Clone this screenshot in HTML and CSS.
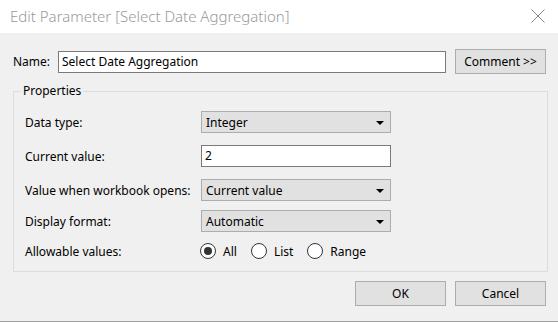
FILE: index.html
```html
<!DOCTYPE html>
<html lang="en">
<head>
  <meta charset="UTF-8">
  <title>Edit Parameter</title>
  <link rel="stylesheet" href="styles.css">
</head>
<body>
  <div class="dialog">
    <!-- Title bar -->
    <div class="titlebar">
      <span class="title">Edit Parameter [Select Date Aggregation]</span>
      <svg class="close" width="14" height="14" viewBox="0 0 14 14">
        <path d="M0.5 0.5 L13.5 13.5 M13.5 0.5 L0.5 13.5" stroke="#8a8a8a" stroke-width="1" fill="none"/>
      </svg>
    </div>

    <div class="content">
      <div class="name-row">
        <span class="name-label">Name:</span>
        <div class="textbox name-box">Select Date Aggregation</div>
        <button class="btn comment-btn">Comment &gt;&gt;</button>
      </div>

      <fieldset class="props">
        <legend>Properties</legend>

        <div class="prop-row">
          <span class="prop-label">Data type:</span>
          <div class="dropdown"><span>Integer</span><i class="caret"></i></div>
        </div>

        <div class="prop-row">
          <span class="prop-label">Current value:</span>
          <div class="textbox value-box">2</div>
        </div>

        <div class="prop-row">
          <span class="prop-label">Value when workbook opens:</span>
          <div class="dropdown"><span>Current value</span><i class="caret"></i></div>
        </div>

        <div class="prop-row tight">
          <span class="prop-label">Display format:</span>
          <div class="dropdown"><span>Automatic</span><i class="caret"></i></div>
        </div>

        <div class="prop-row radios-row">
          <span class="prop-label">Allowable values:</span>
          <div class="radios">
            <span class="radio checked"></span><span class="radio-text">All</span>
            <span class="radio"></span><span class="radio-text">List</span>
            <span class="radio"></span><span class="radio-text">Range</span>
          </div>
        </div>
      </fieldset>

      <div class="actions">
        <button class="btn">OK</button>
        <button class="btn">Cancel</button>
      </div>
    </div>
  </div>
</body>
</html>
```

FILE: styles.css
```css
* {
  margin: 0;
  padding: 0;
  box-sizing: border-box;
}

body {
  width: 558px;
  height: 322px;
  overflow: hidden;
  font-family: "Noto Sans", "Open Sans", sans-serif;
  font-size: 12px;
  color: #000;
  background: #f0f0f0;
}

.dialog {
  width: 558px;
  height: 322px;
  display: flex;
  flex-direction: column;
}

/* title bar */
.titlebar {
  height: 33px;
  background: #ffffff;
  display: flex;
  align-items: center;
  justify-content: space-between;
  padding: 0 13px 1px 10px;
}

.title {
  font-size: 15px;
  color: #9a9a9a;
  font-weight: 300;
}

.close {
  display: block;
  margin-bottom: 1px;
}

.content {
  flex: 1;
  background: #f0f0f0;
  border-bottom: 1px solid #a0a0a0;
  padding: 16px 12px 0 13px;
}

/* name row */
.name-row {
  display: flex;
  align-items: center;
  height: 25px;
}

.name-label {
  width: 45px;
}

.textbox {
  height: 22px;
  background: #ffffff;
  border: 1px solid #7a7a7a;
  padding: 0 3px;
  line-height: 20px;
}

.name-box {
  width: 388px;
  margin-top: 1px;
}

.btn {
  font-family: inherit;
  font-size: 12px;
  width: 91px;
  height: 25px;
  background: #e1e1e1;
  border: 1px solid #adadad;
  color: #000;
}

.comment-btn {
  margin-left: 9px;
}

/* properties group */
.props {
  margin-top: 9px;
  width: 535px;
  border: 1px solid #dcdcdc;
  padding: 12px 0 9px 11px;
}

.props legend {
  margin-left: -4px;
  padding: 0 2px;
  line-height: 16px;
}

.prop-row {
  display: flex;
  align-items: center;
  height: 22px;
  margin-bottom: 12px;
}

.prop-row.tight {
  margin-top: -3px;
  margin-bottom: 8px;
}

.prop-label {
  width: 176px;
}

.dropdown {
  width: 190px;
  height: 22px;
  background: #e1e1e1;
  border: 1px solid #adadad;
  display: flex;
  align-items: center;
  justify-content: space-between;
  padding: 0 6px 0 4px;
}

.caret {
  width: 0;
  height: 0;
  border-left: 4px solid transparent;
  border-right: 4px solid transparent;
  border-top: 4px solid #000;
  margin-top: 1px;
}

.value-box {
  width: 190px;
}

.radios-row {
  margin-bottom: 0;
}

.radios {
  display: flex;
  align-items: center;
  margin-left: -1px;
}

.radio {
  width: 16px;
  height: 16px;
  border-radius: 50%;
  border: 1px solid #333;
  background: #fff;
  display: flex;
  align-items: center;
  justify-content: center;
}

.radio.checked::after {
  content: "";
  width: 8px;
  height: 8px;
  border-radius: 50%;
  background: #333;
}

.radio-text {
  margin-left: 7px;
  margin-right: 14px;
}

/* bottom buttons */
.actions {
  display: flex;
  justify-content: flex-end;
  gap: 9px;
  margin-top: 9px;
}
```
